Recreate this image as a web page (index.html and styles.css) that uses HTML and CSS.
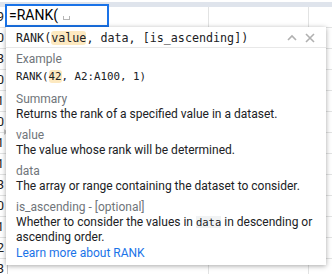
FILE: index.html
```html
<!DOCTYPE html>
<html lang="en">
<head>
  <meta charset="UTF-8">
  <title>RANK</title>
  <link rel="stylesheet" href="styles.css">
</head>
<body>
  <div class="sheet">
    <div class="colhead"></div>
    <div class="grid">
      <div class="row"><div class="rownum"><span>19</span></div><div class="cell"></div><div class="cell"></div><div class="cell"></div></div>
      <div class="row"><div class="rownum"><span>20</span></div><div class="cell"></div><div class="cell"></div><div class="cell"></div></div>
      <div class="row"><div class="rownum"><span>23</span></div><div class="cell"></div><div class="cell"></div><div class="cell"></div></div>
      <div class="row"><div class="rownum"><span>20</span></div><div class="cell"></div><div class="cell"></div><div class="cell"></div></div>
      <div class="row"><div class="rownum"><span>21</span></div><div class="cell"></div><div class="cell"></div><div class="cell"></div></div>
      <div class="row"><div class="rownum"><span>20</span></div><div class="cell"></div><div class="cell"></div><div class="cell"></div></div>
      <div class="row"><div class="rownum"><span>21</span></div><div class="cell"></div><div class="cell"></div><div class="cell"></div></div>
      <div class="row"><div class="rownum"><span>21</span></div><div class="cell"></div><div class="cell"></div><div class="cell"></div></div>
      <div class="row"><div class="rownum"><span>23</span></div><div class="cell"></div><div class="cell"></div><div class="cell"></div></div>
      <div class="row"><div class="rownum"><span>20</span></div><div class="cell"></div><div class="cell"></div><div class="cell"></div></div>
      <div class="row"><div class="rownum"><span>21</span></div><div class="cell"></div><div class="cell"></div><div class="cell"></div></div>
      <div class="row"><div class="rownum"><span>22</span></div><div class="cell"></div><div class="cell"></div><div class="cell"></div></div>
      <div class="row"><div class="rownum"><span>23</span></div><div class="cell"></div><div class="cell"></div><div class="cell"></div></div>
    </div>

    <div class="editor">=RANK(<span class="caret"></span></div>

    <div class="marker"></div>

    <div class="popup">
      <div class="popup-head">
        <span class="sig">RANK(<span class="hl">value</span>, data, [is_ascending])</span>
        <div class="actions">
          <svg width="10" height="10" viewBox="0 0 10 10"><path d="M1 7 L5 3 L9 7" fill="none" stroke="#b0b0b0" stroke-width="1.6"/></svg>
          <svg width="10" height="10" viewBox="0 0 10 10"><path d="M1 1 L9 9 M9 1 L1 9" fill="none" stroke="#b0b0b0" stroke-width="1.6"/></svg>
        </div>
      </div>
      <div class="popup-body">
        <div class="group">
          <div class="label">Example</div>
          <div class="code">RANK(<span class="hl">42</span>, A2:A100, 1)</div>
        </div>
        <div class="group">
          <div class="label">Summary</div>
          <div class="text">Returns the rank of a specified value in a dataset.</div>
        </div>
        <div class="group">
          <div class="label">value</div>
          <div class="text">The value whose rank will be determined.</div>
        </div>
        <div class="group">
          <div class="label">data</div>
          <div class="text">The array or range containing the dataset to consider.</div>
        </div>
        <div class="group">
          <div class="label">is_ascending - [optional]</div>
          <div class="text">Whether to consider the values in <code>data</code> in descending or ascending order.</div>
        </div>
        <a class="more" href="#">Learn more about RANK</a>
      </div>
    </div>
  </div>
</body>
</html>
```

FILE: styles.css
```css
body {
  margin: 0;
  font-family: Roboto, Arial, sans-serif;
  background: #ffffff;
  overflow: hidden;
}

.sheet {
  position: relative;
  width: 332px;
  height: 274px;
  overflow: hidden;
}

.colhead {
  height: 5px;
  margin-top: 2px;
  background: #dfe4ec;
}

.row {
  display: flex;
  height: 20px;
  border-bottom: 1px solid #e2e3e3;
}

.rownum {
  display: flex;
  justify-content: flex-end;
  width: 4px;
  padding-right: 3px;
  flex: none;
  overflow: hidden;
  font-size: 13px;
  line-height: 20px;
  color: #222;
  border-right: 1px solid #c8c8c8;
}

.rownum span {
  flex: none;
}

.cell {
  width: 200px;
  flex: none;
  border-right: 1px solid #e2e3e3;
}

.cell + .cell {
  width: 99px;
}

.cell + .cell + .cell {
  width: 40px;
}

.editor {
  position: absolute;
  left: 5px;
  top: 4px;
  width: 98px;
  height: 19px;
  border: 2px solid #1a73e8;
  background: #fff;
  font-size: 14px;
  line-height: 19px;
  padding-left: 2px;
  color: #000;
}

.caret {
  display: inline-block;
  width: 5px;
  height: 3px;
  margin-left: 5px;
  border: 1px solid #b5b5b5;
  border-top: none;
}

.marker {
  position: absolute;
  left: 4px;
  top: 129px;
  border-left: 4px solid #c4c4c4;
  border-top: 3px solid transparent;
  border-bottom: 3px solid transparent;
}

.popup {
  position: absolute;
  left: 6px;
  top: 27px;
  width: 320px;
  height: 238px;
  background: #fff;
  box-shadow: 0 1px 5px rgba(0, 0, 0, 0.35);
}

.popup-head {
  display: flex;
  align-items: center;
  justify-content: space-between;
  height: 21px;
  padding: 1px 11px 0 10px;
  box-sizing: border-box;
  border-bottom: 1px solid #e8e8e8;
}

.sig, .code, code {
  font-family: "DejaVu Sans Mono", monospace;
  color: #202124;
}

.sig {
  font-size: 11.7px;
}

.hl {
  background: #fde9c0;
  border-radius: 3px;
}

.actions {
  display: flex;
  gap: 8px;
}

.popup-body {
  padding: 4px 10px 0;
  font-size: 12px;
  line-height: 15px;
}

.group {
  margin-bottom: 6px;
}

.group:last-of-type {
  margin-bottom: 1px;
}

.label {
  color: #70757a;
}

.text {
  color: #202124;
}

.code {
  font-size: 10.8px;
  line-height: 19px;
}

code {
  font-size: 10.5px;
  background: #f1f3f4;
}

.more {
  display: block;
  color: #1a73e8;
  text-decoration: none;
}
```
